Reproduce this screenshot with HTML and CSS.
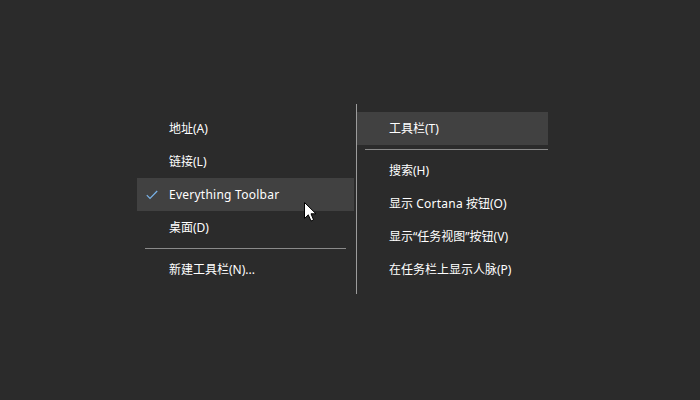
FILE: index.html
```html
<!DOCTYPE html>
<html lang="zh-CN">
<head>
  <meta charset="UTF-8">
  <title>工具栏</title>
  <link rel="stylesheet" href="styles.css">
</head>
<body>
  <div class="stage">
    <ul class="menu menu-left">
      <li class="item">地址(A)</li>
      <li class="item">链接(L)</li>
      <li class="item active">
        <svg class="check" width="12" height="10" viewBox="0 0 12 10">
          <path d="M0.8 5.2 L4 8.4 L11.2 1" fill="none" stroke="#7ab4ea" stroke-width="1.2"/>
        </svg>
        <span class="latin">Everything Toolbar</span>
      </li>
      <li class="item">桌面(D)</li>
      <li class="sep"></li>
      <li class="item">新建工具栏(N)...</li>
    </ul>
    <div class="submenu">
      <ul class="menu menu-right">
        <li class="item active">工具栏(T)</li>
        <li class="sep"></li>
        <li class="item">搜索(H)</li>
        <li class="item">显示 <span class="latin">Cortana</span> 按钮(O)</li>
        <li class="item">显示“任务视图”按钮(V)</li>
        <li class="item">在任务栏上显示人脉(P)</li>
      </ul>
    </div>
  </div>

  <svg class="cursor" width="14" height="21" viewBox="0 0 14 21">
    <path d="M0.5 0.5 L0.5 16.5 L4.3 12.8 L7 19 L9.6 17.9 L7 11.8 L12 11.8 Z" fill="#fff" stroke="#000" stroke-width="1"/>
  </svg>
</body>
</html>
```

FILE: styles.css
```css
body {
  margin: 0;
  width: 700px;
  height: 400px;
  background: #2b2b2b;
  font-family: "Noto Sans", "Noto Sans CJK SC", sans-serif;
  font-size: 12px;
  color: #fff;
  overflow: hidden;
}

.stage {
  display: flex;
  align-items: flex-start;
  padding: 104px 0 0 137px;
}

.menu {
  list-style: none;
  margin: 0;
  padding: 0;
}

.menu-left {
  width: 217px;
  margin-top: 8px;
  margin-right: 2px;
}

.submenu {
  border-left: 1px solid #9c9c9c;
  padding: 8px 0;
}

.menu-right {
  width: 191px;
}

.item {
  position: relative;
  height: 33px;
  line-height: 33px;
  padding-left: 32px;
  white-space: nowrap;
}

.item.active {
  background: #414141;
}

.latin {
  letter-spacing: 0.25px;
}

.check {
  position: absolute;
  left: 9px;
  top: 12px;
}

.sep {
  height: 1px;
  margin: 4px 8px 4px 8px;
  background: #8a8a8a;
}

.menu-right .sep {
  margin-right: 0;
}

.cursor {
  position: absolute;
  left: 304px;
  top: 202px;
}
```
